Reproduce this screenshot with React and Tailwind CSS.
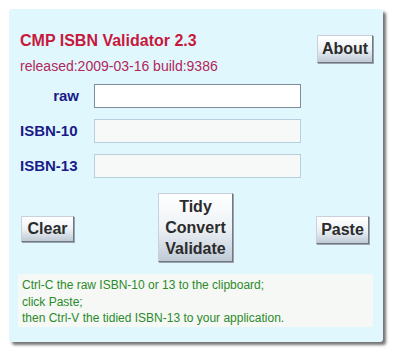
import React from "react";

const btn =
  "bg-gradient-to-b from-white via-[#eef2f6] to-[#bfcad6] border border-[#c8d0da] border-r-[#6f7884] border-b-[#6f7884] shadow-[1px_1px_0_#9aa3ae] text-[#2b2b2b] font-bold text-[16px] leading-[20px]";

export default function App() {
  return (
    <div className="w-[394px] h-[356px] bg-white p-[9px]" style={{ fontFamily: '"Liberation Sans", Arial, sans-serif' }}>
      <div className="w-[374px] h-[333px] bg-[#e0f8fd] rounded-[3px] shadow-[3px_3px_3px_rgba(0,0,0,0.55)] pl-[11px] pr-[10px] pt-[22px] flex flex-col">
        <div className="flex justify-between items-start">
          <div className="flex flex-col">
            <div className="text-[16px] leading-[20px] font-bold text-[#c8183e]">CMP ISBN Validator 2.3</div>
            <div className="text-[14px] leading-[16px] text-[#b2265a] mt-[7px]">released:2009-03-16 build:9386</div>
          </div>
          <button className={`${btn} w-[56px] h-[28px] mt-[4px]`}>About</button>
        </div>

        <div className="mt-[10px] grid grid-cols-[59px_207px] gap-x-[15px] gap-y-[11px] items-center">
          <div className="text-right text-[15px] font-bold text-[#1a1a8a]">raw</div>
          <div className="h-[24px] bg-white border border-[#7f8d98]"></div>
          <div className="text-[15px] font-bold text-[#1a1a8a]">ISBN-10</div>
          <div className="h-[24px] bg-[#f7f8f8] border border-[#b5d0dc]"></div>
          <div className="text-[15px] font-bold text-[#1a1a8a]">ISBN-13</div>
          <div className="h-[24px] bg-[#f7f8f8] border border-[#b5d0dc]"></div>
        </div>

        <div className="mt-[15px] flex items-center">
          <button className={`${btn} w-[53px] h-[26px] ml-[1px] mt-[2px]`}>Clear</button>
          <button className={`${btn} w-[75px] h-[69px] ml-[84px] leading-[21px] flex flex-col items-center justify-center`}>
            <span>Tidy</span>
            <span>Convert</span>
            <span>Validate</span>
          </button>
          <button className={`${btn} w-[53px] h-[28px] ml-[83px] mt-[4px]`}>Paste</button>
        </div>

        <div className="mt-[12px] ml-[-2px] w-[355px] h-[53px] bg-[#f5f8f4] px-[4px] pt-[3px] text-[12px] leading-[16.5px] text-[#2c8a2c]">
          <div>Ctrl-C the raw ISBN-10 or 13 to the clipboard;</div>
          <div>click Paste;</div>
          <div>then Ctrl-V the tidied ISBN-13 to your application.</div>
        </div>
      </div>
    </div>
  );
}
